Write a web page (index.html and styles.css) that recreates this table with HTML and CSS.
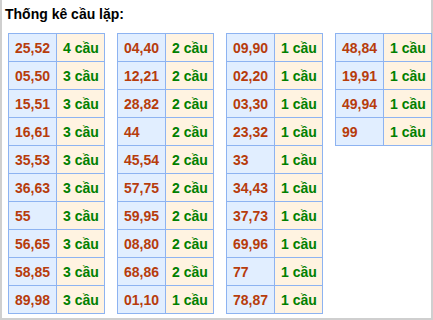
FILE: index.html
```html
<!DOCTYPE html>
<html>
<head>
<meta charset="utf-8">
<link rel="stylesheet" href="styles.css">
</head>
<body>
<div class="box">
  <div class="title">Thống kê cầu lặp:</div>
  <div class="tables">
    <div class="tbl">
      <div class="num">25,52</div><div class="cnt">4 cầu</div>
      <div class="num">05,50</div><div class="cnt">3 cầu</div>
      <div class="num">15,51</div><div class="cnt">3 cầu</div>
      <div class="num">16,61</div><div class="cnt">3 cầu</div>
      <div class="num">35,53</div><div class="cnt">3 cầu</div>
      <div class="num">36,63</div><div class="cnt">3 cầu</div>
      <div class="num">55</div><div class="cnt">3 cầu</div>
      <div class="num">56,65</div><div class="cnt">3 cầu</div>
      <div class="num">58,85</div><div class="cnt">3 cầu</div>
      <div class="num">89,98</div><div class="cnt">3 cầu</div>
    </div>
    <div class="tbl">
      <div class="num">04,40</div><div class="cnt">2 cầu</div>
      <div class="num">12,21</div><div class="cnt">2 cầu</div>
      <div class="num">28,82</div><div class="cnt">2 cầu</div>
      <div class="num">44</div><div class="cnt">2 cầu</div>
      <div class="num">45,54</div><div class="cnt">2 cầu</div>
      <div class="num">57,75</div><div class="cnt">2 cầu</div>
      <div class="num">59,95</div><div class="cnt">2 cầu</div>
      <div class="num">08,80</div><div class="cnt">2 cầu</div>
      <div class="num">68,86</div><div class="cnt">2 cầu</div>
      <div class="num">01,10</div><div class="cnt">1 cầu</div>
    </div>
    <div class="tbl">
      <div class="num">09,90</div><div class="cnt">1 cầu</div>
      <div class="num">02,20</div><div class="cnt">1 cầu</div>
      <div class="num">03,30</div><div class="cnt">1 cầu</div>
      <div class="num">23,32</div><div class="cnt">1 cầu</div>
      <div class="num">33</div><div class="cnt">1 cầu</div>
      <div class="num">34,43</div><div class="cnt">1 cầu</div>
      <div class="num">37,73</div><div class="cnt">1 cầu</div>
      <div class="num">69,96</div><div class="cnt">1 cầu</div>
      <div class="num">77</div><div class="cnt">1 cầu</div>
      <div class="num">78,87</div><div class="cnt">1 cầu</div>
    </div>
    <div class="tbl">
      <div class="num">48,84</div><div class="cnt">1 cầu</div>
      <div class="num">19,91</div><div class="cnt">1 cầu</div>
      <div class="num">49,94</div><div class="cnt">1 cầu</div>
      <div class="num">99</div><div class="cnt">1 cầu</div>
    </div>
  </div>
</div>
</body>
</html>
```
FILE: styles.css
```css
html, body {
  margin: 0;
  padding: 0;
  background: #fff;
}
.box {
  box-sizing: border-box;
  width: 433px;
  height: 320px;
  border-left: 2px solid #cfcfcf;
  border-right: 2px solid #cfcfcf;
  border-bottom: 2px solid #cfcfcf;
  padding: 6px 0 0 6px;
  font-family: "Liberation Sans", Arial, sans-serif;
}
.title {
  font-size: 14px;
  font-weight: bold;
  line-height: 16px;
  color: #000;
  margin-left: -3px;
  height: 27px;
}
.tables {
  display: flex;
  gap: 12px;
  align-items: flex-start;
}
.tbl {
  display: grid;
  grid-template-columns: 48px 48px;
  grid-auto-rows: 28px;
  border-left: 1px solid #8db3f1;
  border-top: 1px solid #8db3f1;
}
.num, .cnt {
  box-sizing: border-box;
  border-right: 1px solid #8db3f1;
  border-bottom: 1px solid #8db3f1;
  padding-left: 6px;
  display: flex;
  align-items: center;
  font-size: 14px;
  font-weight: bold;
  white-space: nowrap;
}
.num {
  background: #e1eeff;
  color: #b73c0c;
}
.cnt {
  background: #fff3e1;
  color: #008000;
}
```
